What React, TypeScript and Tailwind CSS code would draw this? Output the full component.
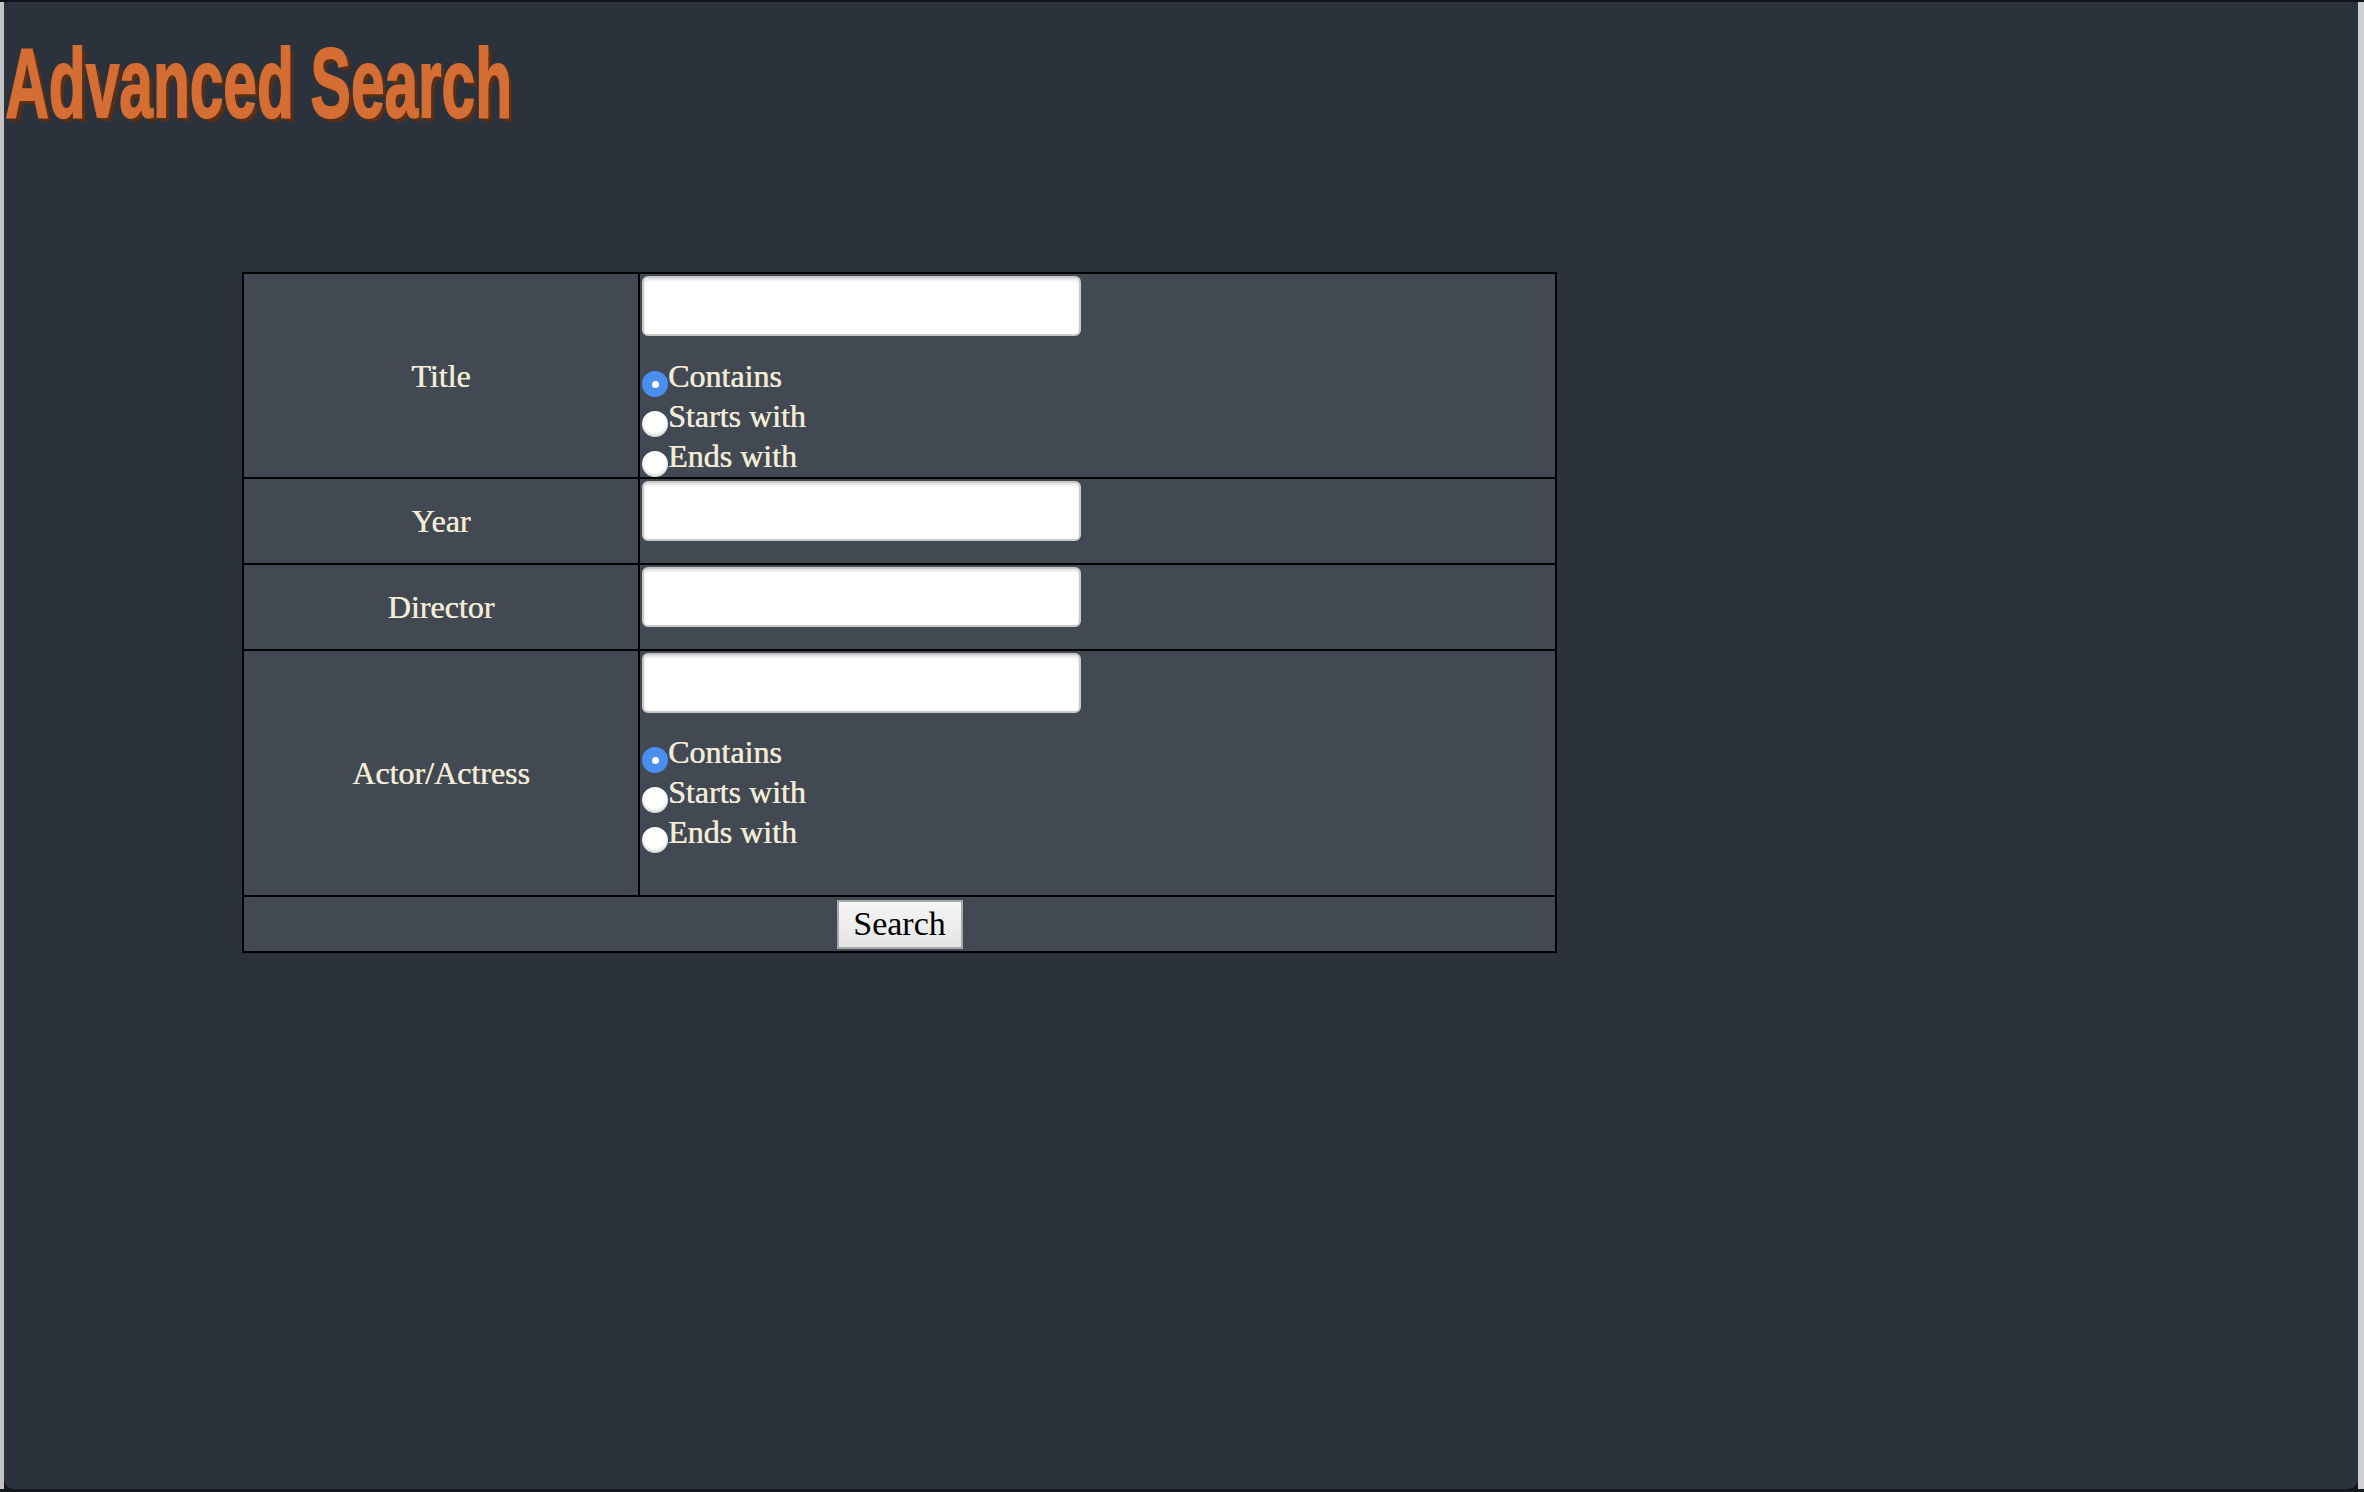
import React, { useState } from 'react';

const serif = { fontFamily: '"Liberation Serif", "DejaVu Serif", serif' };

const Radio: React.FC<{ checked: boolean; onClick: () => void }> = ({ checked, onClick }) => (
  <span
    onClick={onClick}
    className={
      checked
        ? 'w-[26px] h-[26px] rounded-full bg-[#4a8ef0] shrink-0 flex items-center justify-center cursor-pointer'
        : 'w-[26px] h-[26px] rounded-full bg-white shrink-0 shadow-[inset_0_-2px_3px_rgba(0,0,0,0.18)] cursor-pointer'
    }
  >
    {checked && <span className="w-[7px] h-[7px] rounded-full bg-white" />}
  </span>
);

const MatchOptions: React.FC = () => {
  const [mode, setMode] = useState('contains');
  const options = [
    { id: 'contains', label: 'Contains' },
    { id: 'starts', label: 'Starts with' },
    { id: 'ends', label: 'Ends with' },
  ];
  return (
    <div>
      {options.map((o) => (
        <div key={o.id} className="h-10 flex items-end">
          <Radio checked={mode === o.id} onClick={() => setMode(o.id)} />
          <span className="leading-10 self-start -mt-[1px] [text-shadow:0.4px_0_0_#f1ebd8]">{o.label}</span>
        </div>
      ))}
    </div>
  );
};

const TextBox: React.FC = () => (
  <input
    type="text"
    className="block w-[439px] h-[60px] bg-white border-2 border-[#c9c9c9] rounded-[6px] shadow-[inset_0_2px_3px_rgba(0,0,0,0.12)] outline-none px-2 text-[26px] text-black"
  />
);

const Row: React.FC<{ label: string; children: React.ReactNode }> = ({ label, children }) => (
  <div className="flex border-b-2 border-black">
    <div className="w-[396px] shrink-0 border-r-2 border-black flex items-center justify-center leading-10 [text-shadow:0.4px_0_0_#f1ebd8]">
      {label}
    </div>
    <div className="flex-1 px-[2px] pt-[2px]">{children}</div>
  </div>
);

export default function App() {
  return (
    <div className="w-full h-[1492px] flex flex-col bg-[#15181d] overflow-hidden">
      <div className="h-[2px] bg-[#101418]" />
      <div className="flex-1 flex">
        <div className="w-[4px] bg-[#c4c4c4]" />
        <div className="flex-1 bg-[#2c323c] rounded-b-[10px] text-[#f1ebd8] text-[32px]" style={serif}>
          <h1
            className="mt-[31px] pl-[2px] h-[99px] text-[99px] leading-none font-bold text-[#d56e34] scale-x-[0.61] origin-left whitespace-nowrap [text-shadow:6px_4px_0_#5b2f15] [-webkit-text-stroke:2px_#d56e34]"
            style={{ fontFamily: '"Liberation Sans", Arial, sans-serif' }}
          >
            Advanced Search
          </h1>

          <div className="ml-[238px] mt-[140px] w-[1315px] border-2 border-black bg-[#424953]">
            <Row label="Title">
              <TextBox />
              <div className="mt-[21px]">
                <MatchOptions />
              </div>
            </Row>
            <Row label="Year">
              <div className="pb-[22px]">
                <TextBox />
              </div>
            </Row>
            <Row label="Director">
              <div className="pb-[22px]">
                <TextBox />
              </div>
            </Row>
            <Row label="Actor/Actress">
              <TextBox />
              <div className="mt-[20px] pb-[42px]">
                <MatchOptions />
              </div>
            </Row>
            <div className="h-[54px] flex items-center justify-center">
              <button
                type="button"
                className="w-[126px] h-[49px] border-2 border-[#a8a8a8] bg-gradient-to-b from-[#f6f6f6] to-[#e4e4e4] text-black text-[34px] leading-none"
                style={serif}
              >
                Search
              </button>
            </div>
          </div>
        </div>
        <div className="w-[6px] bg-[#cfcfcf]" />
      </div>
      <div className="h-[3px] bg-[#15181d]" />
    </div>
  );
}
